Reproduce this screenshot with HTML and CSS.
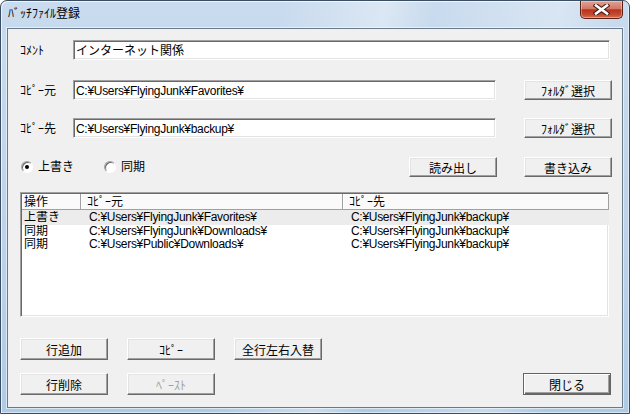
FILE: index.html
```html
<!DOCTYPE html>
<html lang="ja">
<head>
  <meta charset="UTF-8">
  <title>ﾊﾞｯﾁﾌｧｲﾙ登録</title>
  <link rel="stylesheet" href="styles.css">
</head>
<body>

  <div class="window">
    <div class="titlebar">
      <span class="title">ﾊﾞｯﾁﾌｧｲﾙ登録</span>
      <button class="close-btn" aria-label="閉じる">
        <svg width="17" height="11" viewBox="0 0 17 11">
          <path d="M3 1.5 L14 9.5 M14 1.5 L3 9.5" stroke="#4a1a12" stroke-width="4.6" stroke-linecap="square"/>
          <path d="M3 1.5 L14 9.5 M14 1.5 L3 9.5" stroke="#ffffff" stroke-width="2.6" stroke-linecap="square"/>
        </svg>
      </button>
    </div>

    <div class="client">
      <div class="row row-comment">
        <span class="label">ｺﾒﾝﾄ</span>
        <div class="field field-wide">インターネット関係</div>
      </div>

      <div class="row row-src">
        <span class="label">ｺﾋﾟｰ元</span>
        <div class="field path">C:¥Users¥FlyingJunk¥Favorites¥</div>
        <button class="btn btn-folder">ﾌｫﾙﾀﾞ選択</button>
      </div>

      <div class="row row-dst">
        <span class="label">ｺﾋﾟｰ先</span>
        <div class="field path">C:¥Users¥FlyingJunk¥backup¥</div>
        <button class="btn btn-folder">ﾌｫﾙﾀﾞ選択</button>
      </div>

      <div class="row row-mode">
        <label class="radio radio-first"><span class="radio-dot checked"></span>上書き</label>
        <label class="radio"><span class="radio-dot"></span>同期</label>
        <button class="btn btn-read">読み出し</button>
        <button class="btn btn-write">書き込み</button>
      </div>

      <div class="listview">
        <div class="list-head">
          <div class="col col-op">操作</div>
          <div class="col col-src">ｺﾋﾟｰ元</div>
          <div class="col col-dst">ｺﾋﾟｰ先</div>
        </div>
        <div class="list-row selected">
          <div class="col col-op">上書き</div>
          <div class="col col-src path">C:¥Users¥FlyingJunk¥Favorites¥</div>
          <div class="col col-dst path">C:¥Users¥FlyingJunk¥backup¥</div>
        </div>
        <div class="list-row">
          <div class="col col-op">同期</div>
          <div class="col col-src path">C:¥Users¥FlyingJunk¥Downloads¥</div>
          <div class="col col-dst path">C:¥Users¥FlyingJunk¥backup¥</div>
        </div>
        <div class="list-row">
          <div class="col col-op">同期</div>
          <div class="col col-src path">C:¥Users¥Public¥Downloads¥</div>
          <div class="col col-dst path">C:¥Users¥FlyingJunk¥backup¥</div>
        </div>
      </div>

      <div class="row row-actions">
        <button class="btn">行追加</button>
        <button class="btn">ｺﾋﾟｰ</button>
        <button class="btn">全行左右入替</button>
      </div>

      <div class="row row-actions second">
        <button class="btn">行削除</button>
        <button class="btn" disabled>ﾍﾟｰｽﾄ</button>
        <button class="btn btn-default btn-close">閉じる</button>
      </div>
    </div>
  </div>

</body>
</html>
```

FILE: styles.css
```css
* {
  box-sizing: border-box;
}

body {
  margin: 0;
  padding: 0;
  background-color: #ffffff;
  color: #000000;
  font-family: "Liberation Sans", "Noto Sans CJK JP", sans-serif;
  font-size: 12px;
  line-height: 14px;
}

.window {
  width: 630px;
  height: 414px;
  border: 1px solid #3b4d62;
  border-radius: 7px 7px 0 0;
  padding: 0 6px 5px 6px;
  display: flex;
  flex-direction: column;
  background:
    linear-gradient(100deg, rgba(255,255,255,0) 40%, rgba(255,255,255,0.35) 55%, rgba(255,255,255,0) 62%, rgba(255,255,255,0.3) 80%, rgba(255,255,255,0) 88%),
    linear-gradient(180deg, #c9dbee 0%, #bcd2ea 60%, #aecbe6 100%);
  box-shadow: inset 1px 1px 0 rgba(255,255,255,0.7), inset -1px -1px 0 rgba(255,255,255,0.5);
}

.titlebar {
  height: 27px;
  display: flex;
  align-items: center;
  justify-content: space-between;
  padding-left: 1px;
}

.title {
  font-size: 12px;
  padding-bottom: 1px;
}

.close-btn {
  align-self: flex-start;
  width: 43px;
  height: 18px;
  margin: 0;
  padding: 0;
  border: 1px solid #5a2016;
  border-top: none;
  border-radius: 0 0 5px 5px;
  background: linear-gradient(180deg, #e2a292 0%, #d17867 45%, #b9321c 52%, #c44a30 80%, #d9704f 100%);
  box-shadow: inset 0 0 0 1px rgba(255,255,255,0.35);
  display: flex;
  justify-content: center;
  align-items: center;
}

/* 本体 */
.client {
  flex: 1;
  background-color: #f0f0f0;
  border: 1px solid #6a7a8a;
  box-shadow: 0 0 0 1px rgba(255,255,255,0.55);
  padding: 11px 10px 0 12px;
}

.row {
  display: flex;
  align-items: center;
  height: 20px;
}

.row-src {
  margin-top: 20px;
}

.row-dst {
  margin-top: 18px;
}

.row-mode {
  margin-top: 19px;
}

.label {
  width: 53px;
  flex-shrink: 0;
  padding-top: 1px;
}

.path {
  letter-spacing: -0.3px;
}

.field {
  flex: 1;
  height: 20px;
  background-color: #ffffff;
  border: 1px solid;
  border-color: #a0a0a0 #ffffff #ffffff #a0a0a0;
  box-shadow: inset 1px 1px 0 #696969, inset -1px -1px 0 #e3e3e3;
  padding: 3px 0 0 2px;
  white-space: nowrap;
  overflow: hidden;
}

.field-wide {
  margin-right: 2px;
}

.btn {
  height: 20px;
  width: 88px;
  margin: 0;
  padding: 0;
  font-family: inherit;
  font-size: 12px;
  color: #000000;
  background-color: #f0f0f0;
  border: 1px solid;
  border-color: #ffffff #696969 #696969 #ffffff;
  box-shadow: inset -1px -1px 0 #a0a0a0, inset 1px 1px 0 #e3e3e3;
}

.btn:disabled {
  color: #a0a0a0;
}

.btn-default {
  border: 1px solid #646464;
  box-shadow: inset 1px 1px 0 #ffffff, inset -1px -1px 0 #696969, inset -2px -2px 0 #a0a0a0;
}

.btn-folder {
  margin-left: 28px;
}

.radio {
  display: flex;
  align-items: center;
  gap: 5px;
}

.radio-first {
  width: 84px;
  padding-left: 1px;
}

.radio-dot {
  width: 12px;
  height: 12px;
  border-radius: 50%;
  border: 1px solid;
  border-color: #a0a0a0 #ffffff #ffffff #a0a0a0;
  background-color: #ffffff;
  box-shadow: inset 1px 1px 0 #696969;
  position: relative;
}

.radio-dot.checked::after {
  content: "";
  position: absolute;
  left: 3px;
  top: 3px;
  width: 4px;
  height: 4px;
  border-radius: 50%;
  background-color: #000000;
}

.btn-read {
  margin-left: auto;
}

.btn-write {
  margin-left: 27px;
}

/* 一覧 */
.listview {
  margin-top: 15px;
  width: 589px;
  height: 125px;
  background-color: #ffffff;
  border: 1px solid;
  border-color: #a0a0a0 #ffffff #ffffff #a0a0a0;
  box-shadow: inset 1px 1px 0 #696969, inset -1px -1px 0 #e3e3e3;
  padding: 1px 0 0 1px;
}

.list-head {
  display: flex;
  height: 16px;
  width: 587px;
  background-color: #fafafa;
}

.list-head .col {
  border-right: 1px solid #a0a0a0;
  border-bottom: 1px solid #a0a0a0;
  box-shadow: inset 1px 1px 0 #ffffff;
  padding: 1px 0 0 2px;
}

.list-row {
  display: flex;
  height: 13px;
  line-height: 13px;
  width: 587px;
}

.list-row.selected {
  background-color: #ececec;
  height: 15px;
  padding-top: 1px;
}

.col {
  white-space: nowrap;
  overflow: hidden;
}

.col-op {
  width: 59px;
  padding-left: 2px;
}

.col-src {
  width: 262px;
}

.col-dst {
  flex: 1;
}

.list-head .col-src,
.list-head .col-dst {
  padding-left: 6px;
}

.list-row .col-src,
.list-row .col-dst {
  padding-left: 8px;
}

.row-actions {
  margin-top: 21px;
  height: 22px;
  gap: 19px;
}

.row-actions .btn {
  height: 22px;
}

.row-actions.second {
  margin-top: 13px;
}

.btn-close {
  margin-left: auto;
  margin-right: 1px;
}
```
